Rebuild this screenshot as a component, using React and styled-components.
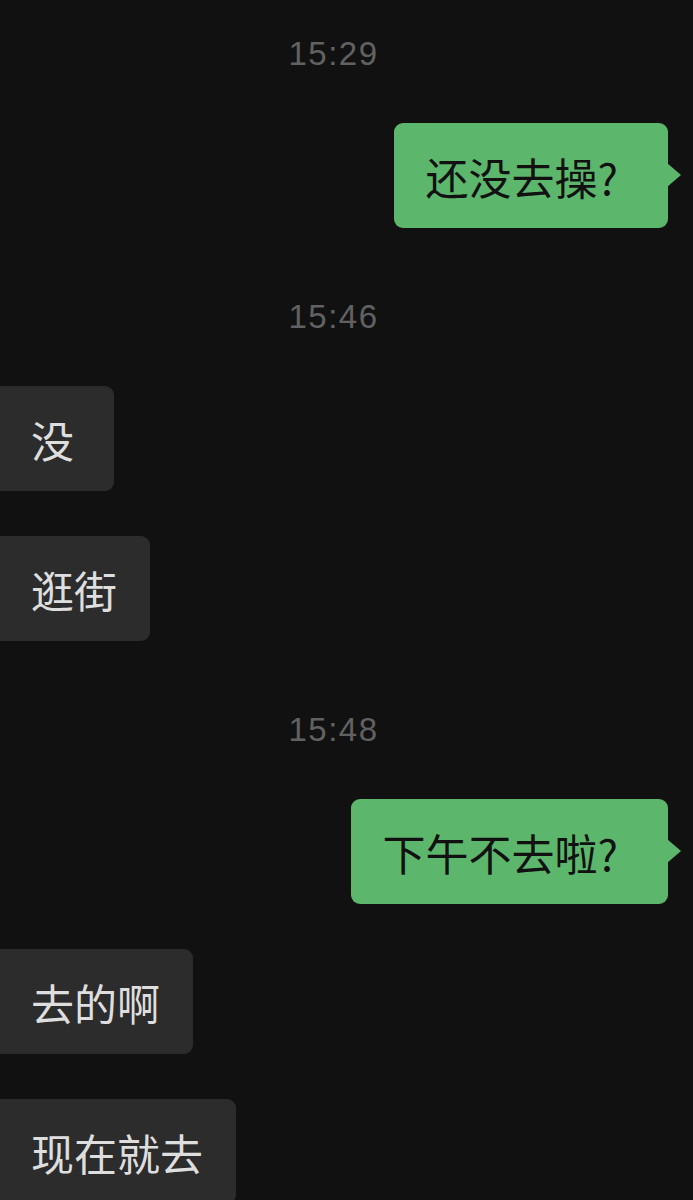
import React from "react";
import styled, { createGlobalStyle } from "styled-components";

const messages = [
  { type: "time", text: "15:29" },
  { type: "msg", mine: true, text: "还没去操?" },
  { type: "time", text: "15:46" },
  { type: "msg", mine: false, text: "没" },
  { type: "msg", mine: false, text: "逛街" },
  { type: "time", text: "15:48" },
  { type: "msg", mine: true, text: "下午不去啦?" },
  { type: "msg", mine: false, text: "去的啊" },
  { type: "msg", mine: false, text: "现在就去" },
];

const App = () => {
  return (
    <>
      <GlobalStyle />
      <Chat>
        {messages.map((m, i) =>
          m.type === "time" ? (
            <TimeStamp key={i}>{m.text}</TimeStamp>
          ) : (
            <Row key={i} $mine={m.mine}>
              <Bubble $mine={m.mine}>{m.text}</Bubble>
            </Row>
          )
        )}
      </Chat>
    </>
  );
};

const GlobalStyle = createGlobalStyle`
  html, body {
    margin: 0;
    padding: 0;
    background: #111111;
    overflow: hidden;
  }
`;

const Chat = styled.div`
  display: flex;
  flex-direction: column;
  gap: 45px;
  width: 693px;
  min-height: 1200px;
  padding-top: 10px;
  background: #111111;
  font-family: "Noto Sans CJK SC", "Noto Sans", sans-serif;
`;

const TimeStamp = styled.div`
  height: 40px;
  line-height: 40px;
  margin-top: 24px;
  margin-bottom: 4px;
  padding-right: 26px;
  text-align: center;
  font-family: "Liberation Sans", Arial, sans-serif;
  font-size: 33px;
  letter-spacing: 1.5px;
  color: #616161;
`;

const Row = styled.div`
  display: flex;
  justify-content: ${(p) => (p.$mine ? "flex-end" : "flex-start")};
  padding-right: ${(p) => (p.$mine ? "25px" : "0")};
`;

const Bubble = styled.div`
  position: relative;
  display: flex;
  align-items: center;
  box-sizing: border-box;
  height: 105px;
  min-width: ${(p) => (p.$mine ? "0" : "124px")};
  margin-left: ${(p) => (p.$mine ? "0" : "-10px")};
  padding: ${(p) => (p.$mine ? "0 50px 0 32px" : "0 33px 0 41px")};
  border-radius: 9px;
  background: ${(p) => (p.$mine ? "#5cb76c" : "#2c2c2c")};
  color: ${(p) => (p.$mine ? "#111111" : "#dedede")};
  font-size: 43px;
  white-space: nowrap;

  &::after {
    content: "";
    display: ${(p) => (p.$mine ? "block" : "none")};
    position: absolute;
    right: -13px;
    top: 50%;
    margin-top: -13px;
    border-top: 12px solid transparent;
    border-bottom: 12px solid transparent;
    border-left: 14px solid #5cb76c;
  }
`;

export default App;
